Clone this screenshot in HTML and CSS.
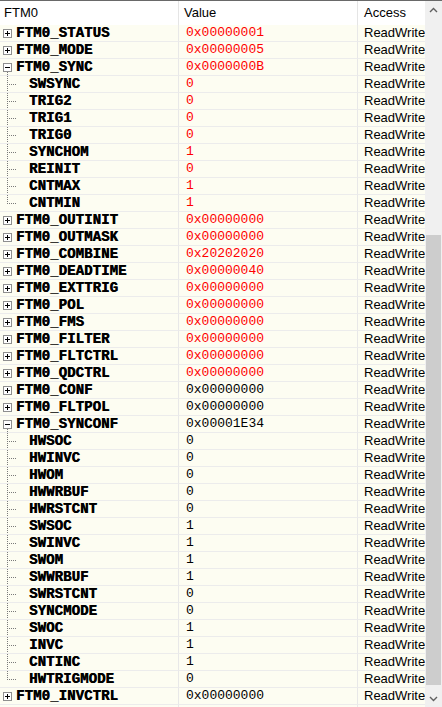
FILE: index.html
```html
<!DOCTYPE html>
<html>
<head>
<meta charset="utf-8">
<link rel="stylesheet" href="styles.css">
</head>
<body>
<div class="window">
  <div class="grid">
    <div class="header">
      <div class="hcell">FTM0</div>
      <div class="hcell">Value</div>
      <div class="hcell last">Access</div>
    </div>
    <div class="rows">
      <div class="row"><div class="name"><span class="box plus"></span><span class="reg">FTM0_STATUS</span></div><div class="val red">0x00000001</div><div class="acc">ReadWrite</div></div>
      <div class="row"><div class="name"><span class="box plus"></span><span class="reg">FTM0_MODE</span></div><div class="val red">0x00000005</div><div class="acc">ReadWrite</div></div>
      <div class="row"><div class="name open"><span class="box"></span><span class="reg">FTM0_SYNC</span></div><div class="val red">0x0000000B</div><div class="acc">ReadWrite</div></div>
      <div class="row"><div class="name"><span class="branch"></span><span class="fld">SWSYNC</span></div><div class="val red">0</div><div class="acc">ReadWrite</div></div>
      <div class="row"><div class="name"><span class="branch"></span><span class="fld">TRIG2</span></div><div class="val red">0</div><div class="acc">ReadWrite</div></div>
      <div class="row"><div class="name"><span class="branch"></span><span class="fld">TRIG1</span></div><div class="val red">0</div><div class="acc">ReadWrite</div></div>
      <div class="row"><div class="name"><span class="branch"></span><span class="fld">TRIG0</span></div><div class="val red">0</div><div class="acc">ReadWrite</div></div>
      <div class="row"><div class="name"><span class="branch"></span><span class="fld">SYNCHOM</span></div><div class="val red">1</div><div class="acc">ReadWrite</div></div>
      <div class="row"><div class="name"><span class="branch"></span><span class="fld">REINIT</span></div><div class="val red">0</div><div class="acc">ReadWrite</div></div>
      <div class="row"><div class="name"><span class="branch"></span><span class="fld">CNTMAX</span></div><div class="val red">1</div><div class="acc">ReadWrite</div></div>
      <div class="row"><div class="name"><span class="branch end"></span><span class="fld">CNTMIN</span></div><div class="val red">1</div><div class="acc">ReadWrite</div></div>
      <div class="row"><div class="name"><span class="box plus"></span><span class="reg">FTM0_OUTINIT</span></div><div class="val red">0x00000000</div><div class="acc">ReadWrite</div></div>
      <div class="row"><div class="name"><span class="box plus"></span><span class="reg">FTM0_OUTMASK</span></div><div class="val red">0x00000000</div><div class="acc">ReadWrite</div></div>
      <div class="row"><div class="name"><span class="box plus"></span><span class="reg">FTM0_COMBINE</span></div><div class="val red">0x20202020</div><div class="acc">ReadWrite</div></div>
      <div class="row"><div class="name"><span class="box plus"></span><span class="reg">FTM0_DEADTIME</span></div><div class="val red">0x00000040</div><div class="acc">ReadWrite</div></div>
      <div class="row"><div class="name"><span class="box plus"></span><span class="reg">FTM0_EXTTRIG</span></div><div class="val red">0x00000000</div><div class="acc">ReadWrite</div></div>
      <div class="row"><div class="name"><span class="box plus"></span><span class="reg">FTM0_POL</span></div><div class="val red">0x00000000</div><div class="acc">ReadWrite</div></div>
      <div class="row"><div class="name"><span class="box plus"></span><span class="reg">FTM0_FMS</span></div><div class="val red">0x00000000</div><div class="acc">ReadWrite</div></div>
      <div class="row"><div class="name"><span class="box plus"></span><span class="reg">FTM0_FILTER</span></div><div class="val red">0x00000000</div><div class="acc">ReadWrite</div></div>
      <div class="row"><div class="name"><span class="box plus"></span><span class="reg">FTM0_FLTCTRL</span></div><div class="val red">0x00000000</div><div class="acc">ReadWrite</div></div>
      <div class="row"><div class="name"><span class="box plus"></span><span class="reg">FTM0_QDCTRL</span></div><div class="val red">0x00000000</div><div class="acc">ReadWrite</div></div>
      <div class="row"><div class="name"><span class="box plus"></span><span class="reg">FTM0_CONF</span></div><div class="val">0x00000000</div><div class="acc">ReadWrite</div></div>
      <div class="row"><div class="name"><span class="box plus"></span><span class="reg">FTM0_FLTPOL</span></div><div class="val">0x00000000</div><div class="acc">ReadWrite</div></div>
      <div class="row"><div class="name open"><span class="box"></span><span class="reg">FTM0_SYNCONF</span></div><div class="val">0x00001E34</div><div class="acc">ReadWrite</div></div>
      <div class="row"><div class="name"><span class="branch"></span><span class="fld">HWSOC</span></div><div class="val">0</div><div class="acc">ReadWrite</div></div>
      <div class="row"><div class="name"><span class="branch"></span><span class="fld">HWINVC</span></div><div class="val">0</div><div class="acc">ReadWrite</div></div>
      <div class="row"><div class="name"><span class="branch"></span><span class="fld">HWOM</span></div><div class="val">0</div><div class="acc">ReadWrite</div></div>
      <div class="row"><div class="name"><span class="branch"></span><span class="fld">HWWRBUF</span></div><div class="val">0</div><div class="acc">ReadWrite</div></div>
      <div class="row"><div class="name"><span class="branch"></span><span class="fld">HWRSTCNT</span></div><div class="val">0</div><div class="acc">ReadWrite</div></div>
      <div class="row"><div class="name"><span class="branch"></span><span class="fld">SWSOC</span></div><div class="val">1</div><div class="acc">ReadWrite</div></div>
      <div class="row"><div class="name"><span class="branch"></span><span class="fld">SWINVC</span></div><div class="val">1</div><div class="acc">ReadWrite</div></div>
      <div class="row"><div class="name"><span class="branch"></span><span class="fld">SWOM</span></div><div class="val">1</div><div class="acc">ReadWrite</div></div>
      <div class="row"><div class="name"><span class="branch"></span><span class="fld">SWWRBUF</span></div><div class="val">1</div><div class="acc">ReadWrite</div></div>
      <div class="row"><div class="name"><span class="branch"></span><span class="fld">SWRSTCNT</span></div><div class="val">0</div><div class="acc">ReadWrite</div></div>
      <div class="row"><div class="name"><span class="branch"></span><span class="fld">SYNCMODE</span></div><div class="val">0</div><div class="acc">ReadWrite</div></div>
      <div class="row"><div class="name"><span class="branch"></span><span class="fld">SWOC</span></div><div class="val">1</div><div class="acc">ReadWrite</div></div>
      <div class="row"><div class="name"><span class="branch"></span><span class="fld">INVC</span></div><div class="val">1</div><div class="acc">ReadWrite</div></div>
      <div class="row"><div class="name"><span class="branch"></span><span class="fld">CNTINC</span></div><div class="val">1</div><div class="acc">ReadWrite</div></div>
      <div class="row"><div class="name"><span class="branch end"></span><span class="fld">HWTRIGMODE</span></div><div class="val">0</div><div class="acc">ReadWrite</div></div>
      <div class="row"><div class="name"><span class="box plus"></span><span class="reg">FTM0_INVCTRL</span></div><div class="val">0x00000000</div><div class="acc">ReadWrite</div></div>
      <div class="row"><div class="name"></div><div class="val"></div><div class="acc"></div></div>
    </div>
  </div>
  <div class="scrollbar">
    <div class="sbtn"><svg width="9" height="6" viewBox="0 0 9 6"><path d="M1 5 L4.5 1.5 L8 5" fill="none" stroke="#606060" stroke-width="1.4"/></svg></div>
    <div class="track">
      <div class="thumb"></div>
    </div>
    <div class="sbtn"><svg width="9" height="6" viewBox="0 0 9 6"><path d="M1 1 L4.5 4.5 L8 1" fill="none" stroke="#606060" stroke-width="1.4"/></svg></div>
  </div>
</div>
</body>
</html>
```

FILE: styles.css
```css
html, body {
  margin: 0;
  padding: 0;
  background: #ffffff;
}

.window {
  width: 442px;
  height: 707px;
  overflow: hidden;
  border-top: 1px solid #696969;
  box-sizing: border-box;
  display: flex;
}

.grid {
  width: 425px;
  flex: none;
  display: flex;
  flex-direction: column;
  overflow: hidden;
}

.header {
  display: grid;
  grid-template-columns: 179px 179px 67px;
  height: 24px;
  flex: none;
  background: #ffffff;
}

.hcell {
  font-family: "Liberation Sans", Arial, sans-serif;
  font-size: 13px;
  color: #000000;
  line-height: 24px;
  padding-left: 4px;
  border-right: 1px solid #e5e5e5;
  white-space: nowrap;
  overflow: hidden;
}

.hcell:nth-child(2) {
  padding-left: 5px;
}

.hcell.last {
  border-right: none;
  padding-left: 6px;
}

.rows {
  display: flex;
  flex-direction: column;
}

.row {
  display: grid;
  grid-template-columns: 179px 179px 67px;
  height: 17px;
  flex: none;
  background: #fdfdf2;
}

.row > div {
  border-bottom: 1px solid #ececec;
  height: 16px;
  overflow: hidden;
  white-space: nowrap;
}

.name,
.val {
  border-right: 1px solid #e8e8e8;
}

.name {
  display: flex;
  align-items: center;
}

.name.open {
  background-image: repeating-linear-gradient(to bottom, #7a7a7a 0 1px, transparent 1px 2px);
  background-repeat: no-repeat;
  background-size: 1px 3px;
  background-position: 7px 13px;
}

.box {
  width: 9px;
  height: 9px;
  box-sizing: border-box;
  border: 1px solid #8f8f8f;
  margin-left: 3px;
  flex: none;
  background-color: #ffffff;
  background-image: linear-gradient(#000, #000);
  background-repeat: no-repeat;
  background-size: 5px 1px;
  background-position: center;
}

.box.plus {
  background-image: linear-gradient(#000, #000), linear-gradient(#000, #000);
  background-size: 5px 1px, 1px 5px;
  background-position: center, center;
}

.reg,
.fld {
  font-family: "Liberation Mono", "Courier New", monospace;
  font-weight: bold;
  font-size: 14px;
  letter-spacing: 0.1px;
  color: #000000;
  line-height: 16px;
  text-shadow: 0.6px 0 0 #000000;
}

.reg {
  margin-left: 4px;
}

.branch {
  width: 16px;
  height: 16px;
  flex: none;
  background-image:
    repeating-linear-gradient(to bottom, #7a7a7a 0 1px, transparent 1px 2px),
    repeating-linear-gradient(to right, #7a7a7a 0 1px, transparent 1px 2px);
  background-repeat: no-repeat;
  background-size: 1px 16px, 8px 1px;
  background-position: 7px 0, 9px 8px;
}

.branch.end {
  background-size: 1px 9px, 8px 1px;
}

.fld {
  margin-left: 13px;
}

.val {
  font-family: "Liberation Mono", "Courier New", monospace;
  font-size: 13px;
  line-height: 16px;
  color: #000000;
  padding-left: 7px;
}

.val.red {
  color: #ff0000;
}

.acc {
  font-family: "Liberation Sans", Arial, sans-serif;
  font-size: 13px;
  line-height: 16px;
  color: #000000;
  padding-left: 6px;
}

.scrollbar {
  width: 17px;
  flex: none;
  background: #f0f0f0;
  display: flex;
  flex-direction: column;
}

.sbtn {
  height: 17px;
  flex: none;
  display: flex;
  align-items: center;
  justify-content: center;
}

.track {
  flex: 1;
  display: flex;
  flex-direction: column;
  padding-top: 217px;
  padding-bottom: 5px;
}

.thumb {
  flex: 1;
  margin: 0 1px;
  background: #cdcdcd;
}
```
